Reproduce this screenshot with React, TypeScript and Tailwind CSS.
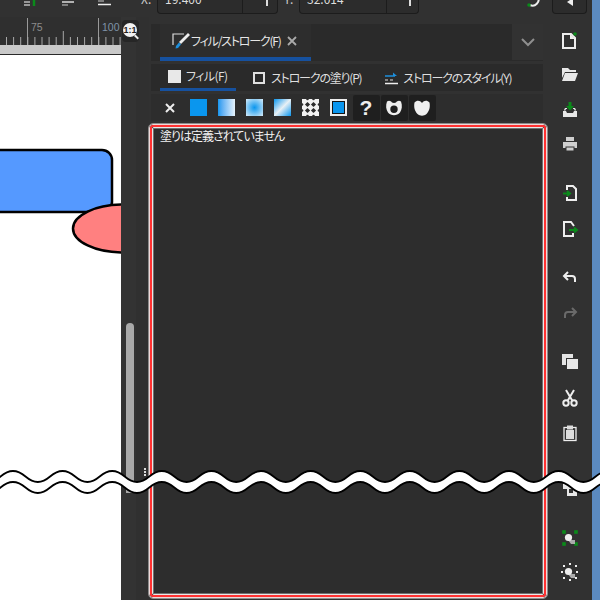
const JP = "font-['Noto_Sans_CJK_JP','Noto_Sans',sans-serif] [font-feature-settings:'palt']";

function Ruler() {
  const ticks = Array.from({ length: 18 }, (_, i) => i);
  return (
    <div className="h-[28px] bg-[#2f2f2f] relative">
      <svg width="121" height="28" className="block">
        <line x1="27.5" y1="1" x2="27.5" y2="28" stroke="#9a9a9a" />
        <line x1="98.5" y1="1" x2="98.5" y2="28" stroke="#9a9a9a" />
        {ticks.map((i) => (
          <line key={i} x1={6.5 + i * 7.1} y1={i === 8 ? 14 : 20} x2={6.5 + i * 7.1} y2="28" stroke="#a8a8a8" />
        ))}
        <text x="31" y="14" fontSize="10.5" fill="#8c8c8c" fontFamily="Liberation Sans">75</text>
        <text x="102" y="14" fontSize="10.5" fill="#7f93a8" fontFamily="Liberation Sans">100</text>
      </svg>
    </div>
  );
}

function DocNew() {
  return (
    <svg width="20" height="20" viewBox="0 0 20 20">
      <path d="M3 3h8l4 4v10H3z" fill="none" stroke="#eee" strokeWidth="2" />
      <path d="M10 3v5h5z" fill="#eee" />
      <circle cx="15" cy="3" r="1.8" fill="#0a8a1a" />
    </svg>
  );
}
function Open() {
  return (
    <svg width="20" height="20" viewBox="0 0 20 20">
      <path d="M2 3h6l2 2h6v2H5L2 13z" fill="#e8e8e8" />
      <path d="M5 8h13l-3 8H2z" fill="#e8e8e8" />
    </svg>
  );
}
function Save() {
  return (
    <svg width="20" height="20" viewBox="0 0 20 20">
      <path d="M3 11h3l1 2h6l1-2h3v6H3z" fill="#e8e8e8" />
      <path d="M4 10l1-2h2v1H6l-1 2zM16 10l-1-2h-2v1h1l1 2z" fill="#e8e8e8" />
      <path d="M8.5 2h3v4h2.5L10 10.500 6 6h2.500z" fill="#0a8a1a" />
    </svg>
  );
}
function Print() {
  return (
    <svg width="20" height="20" viewBox="0 0 20 20">
      <rect x="6" y="3" width="8" height="4" fill="#cfcfcf" />
      <rect x="3" y="8" width="14" height="6" fill="#cfcfcf" />
      <rect x="6" y="13" width="8" height="4" fill="#cfcfcf" stroke="#333" />
    </svg>
  );
}
function Import() {
  return (
    <svg width="20" height="20" viewBox="0 0 20 20">
      <path d="M7 7V3h6l3 3v11H7v-3" fill="none" stroke="#eee" strokeWidth="2" />
      <path d="M3 10.500h6M7 8l3 2.500L7 13" fill="none" stroke="#0a8a1a" strokeWidth="2" />
    </svg>
  );
}
function Export() {
  return (
    <svg width="20" height="20" viewBox="0 0 20 20">
      <path d="M14 7l-3-4H4v14h9v-3" fill="none" stroke="#eee" strokeWidth="2" />
      <path d="M9 11h7M14 8.500l3 2.500-3 2.500" fill="none" stroke="#0a8a1a" strokeWidth="2" />
    </svg>
  );
}
function Undo({ color = "#eee", flip = false }: { color?: string; flip?: boolean }) {
  return (
    <svg width="20" height="20" viewBox="0 0 20 20" style={flip ? { transform: "scaleX(-1)" } : undefined}>
      <path d="M4 8h8a3 3 0 0 1 3 3v3" fill="none" stroke={color} strokeWidth="2" />
      <path d="M8 4L4 8l4 4" fill="none" stroke={color} strokeWidth="2" />
    </svg>
  );
}
function Copy() {
  return (
    <svg width="20" height="20" viewBox="0 0 20 20">
      <rect x="2" y="2" width="11" height="11" fill="#e4e4e4" />
      <rect x="6.500" y="6.500" width="12" height="11" fill="#e8e8e8" stroke="#333" />
    </svg>
  );
}
function Cut() {
  return (
    <svg width="20" height="20" viewBox="0 0 20 20">
      <path d="M6 2l6.500 11M14 2L7.500 13" stroke="#eee" strokeWidth="2" fill="none" />
      <circle cx="6" cy="15" r="2.700" stroke="#eee" strokeWidth="2" fill="none" />
      <circle cx="14" cy="15" r="2.700" stroke="#eee" strokeWidth="2" fill="none" />
    </svg>
  );
}
function Paste() {
  return (
    <svg width="20" height="20" viewBox="0 0 20 20">
      <rect x="4" y="4.500" width="12" height="13" fill="none" stroke="#eee" strokeWidth="1.300" />
      <rect x="6" y="7" width="8" height="9" fill="#ddd" />
      <rect x="7" y="2.500" width="6" height="4" fill="#ddd" />
    </svg>
  );
}
function Dup() {
  return (
    <svg width="20" height="20" viewBox="0 0 20 20">
      <rect x="3" y="4" width="6" height="6" fill="#e8e8e8" />
      <rect x="7" y="8" width="10" height="9" fill="#e8e8e8" />
      <rect x="9" y="10" width="4" height="4" fill="#333" />
    </svg>
  );
}
function Group({ dots }: { dots: string }) {
  const r = dots === "#eee" ? 1 : 1.8;
  return (
    <svg width="20" height="20" viewBox="0 0 20 20">
      {[[4, 4], [16, 4], [4, 16], [16, 16]].map(([x, y]) => (
        <rect key={`${x}${y}`} x={x - r} y={y - r} width={r * 2} height={r * 2} fill={dots} />
      ))}
      {dots === "#eee" && [[10, 2], [2, 10], [17, 10], [10, 18]].map(([x, y]) => (
        <rect key={`${x}${y}`} x={x - 1} y={y - 1} width="2" height="2" fill="#eee" />
      ))}
      <path d="M8 12h7v4H11z" fill="#aaa" />
      <circle cx="8.500" cy="9.500" r="3.600" fill="#eee" />
    </svg>
  );
}

function Tool({ children, className = "" }: { children: React.ReactNode; className?: string }) {
  return <div className={`h-[34px] w-full flex items-center justify-center ${className}`}>{children}</div>;
}

function Swatch({ className, children }: { className?: string; children?: React.ReactNode }) {
  return <div className={`w-[17px] h-[17px] mx-[5.5px] shrink-0 ${className ?? ""}`}>{children}</div>;
}

function DarkBtn({ children }: { children: React.ReactNode }) {
  return <div className="w-[27px] h-[26px] mr-px bg-[#1f1f1f] rounded-[2px] flex items-center justify-center shrink-0">{children}</div>;
}

export default function App() {
  return (
    <div className={`w-[600px] h-[600px] relative overflow-hidden bg-[#313131] flex ${JP}`}>
      <div className="w-[547px] shrink-0 flex flex-col">
        {/* top toolbar */}
        <div className="h-[17px] flex items-start shrink-0 overflow-hidden">
          <svg width="130" height="17" className="shrink-0">
            <path d="M24 2h6M24 5h6" stroke="#bbb" strokeWidth="1.500" />
            <path d="M34 0v6" stroke="#0a8a1a" strokeWidth="2.500" />
            <path d="M62 2h12" stroke="#ddd" strokeWidth="1.500" />
            <path d="M62 5h6" stroke="#999" strokeWidth="1.500" />
            <path d="M98 1h6" stroke="#999" strokeWidth="1.500" />
            <path d="M98 4.500h13" stroke="#eee" strokeWidth="1.500" />
          </svg>
          <span className="w-[27px] text-[12px] leading-[8px] text-[#ccc] mt-[-5px] pl-[11px] shrink-0">X:</span>
          <div className="w-[121px] h-[14px] border border-t-0 border-[#1c1c1c] rounded-b-[4px] bg-[#2c2c2c] flex shrink-0 overflow-hidden">
            <span className="flex-1 pl-[7px] text-[12px] leading-[8px] text-[#ddd] mt-[-5px]">19.400</span>
            <span className="w-[35px] border-l border-[#1c1c1c] flex justify-center pl-[14px] shrink-0">
              <span className="w-[2px] h-[6px] bg-[#ddd]" />
            </span>
          </div>
          <span className="w-[21px] text-[12px] leading-[8px] text-[#ccc] mt-[-5px] pl-[6px] shrink-0">Y:</span>
          <div className="w-[120px] h-[14px] border border-t-0 border-[#1c1c1c] rounded-b-[4px] bg-[#2c2c2c] flex shrink-0 overflow-hidden">
            <span className="flex-1 pl-[7px] text-[12px] leading-[8px] text-[#ddd] mt-[-5px]">32.014</span>
            <span className="w-[32px] border-l border-[#1c1c1c] flex justify-center pl-[14px] shrink-0">
              <span className="w-[2px] h-[6px] bg-[#ddd]" />
            </span>
          </div>
          <div className="flex-1" />
          <svg width="20" height="10" viewBox="0 0 20 10" className="shrink-0 mr-[4px]">
            <path d="M15 -3a6 6 0 0 1-8 8" fill="none" stroke="#eee" strokeWidth="2" />
            <circle cx="6" cy="5" r="1.800" fill="#0a8a1a" />
          </svg>
        </div>

        <div className="flex-1 flex min-h-0">
          {/* canvas */}
          <div className="w-[121px] flex flex-col shrink-0">
            <Ruler />
            <div className="h-[10px] bg-[#c9c9c9] border-b border-[#2a2a2a]" />
            <div className="flex-1 bg-white overflow-hidden relative">
              <svg width="121" height="545" className="block">
                <rect x="-30" y="95" width="142" height="62" rx="10" fill="#5599ff" stroke="#000" strokeWidth="2.500" />
                <ellipse cx="123" cy="173.500" rx="50" ry="24" fill="#ff8080" stroke="#000" strokeWidth="2.500" />
              </svg>
            </div>
          </div>

          {/* scroll gutter */}
          <div className="w-[15px] shrink-0 pt-[306px] pl-[5px] bg-[#333333]">
            <div className="w-[8px] h-[170px] bg-[#a9a9a9] rounded-t-[4px]" />
          </div>
          <div className="w-[13px] shrink-0 bg-[#303030] pt-[451px] pl-[8px]">
            <div className="w-[2px] h-[2px] bg-[#ddd] mb-[1px]" />
            <div className="w-[2px] h-[2px] bg-[#ddd] mb-[1px]" />
            <div className="w-[2px] h-[2px] bg-[#ddd]" />
          </div>

          {/* dock */}
          <div className="w-[398px] shrink-0 flex flex-col">
            <div className="h-[7px] shrink-0" />
            {/* tab bar */}
            <div className="ml-[2px] mr-[4px] h-[37px] bg-[#2a2a2a] flex justify-between shrink-0">
              <div className="ml-[9px] w-[151px] h-[37px] border-b-[4px] border-[#16519f] bg-[#2d2d2d] flex items-center pl-[12px]">
                <svg width="18" height="18" viewBox="0 0 18 18" className="shrink-0">
                  <path d="M1 13V2h11" fill="none" stroke="#ddd" strokeWidth="1.200" />
                  <path d="M16 1l2 2-9 9-2-2z" fill="#eee" />
                  <path d="M7 10.500l2 2-3 3.500-2.500.5.500-2.500z" fill="#1d8fdc" />
                </svg>
                <span className="ml-px text-[12px] tracking-[-1.2px] text-[#e6e6e6] whitespace-nowrap">フィル/ストローク(F)</span>
                <svg width="10" height="10" viewBox="0 0 10 10" className="ml-[6px]">
                  <path d="M1 1l8 8M9 1l-8 8" stroke="#aaa" strokeWidth="1.800" />
                </svg>
              </div>
              <div className="w-[31px] h-[36px] bg-[#323232] flex items-center justify-center">
                <svg width="14" height="10" viewBox="0 0 14 10">
                  <path d="M1 2l6 6 6-6" fill="none" stroke="#8f8f8f" strokeWidth="2" />
                </svg>
              </div>
            </div>
            <div className="h-[3px] shrink-0" />
            {/* sub tabs */}
            <div className="ml-[2px] mr-[4px] h-[27px] bg-[#2a2a2a] flex items-center shrink-0 text-[12px] tracking-[-1.2px] text-[#dedede] whitespace-nowrap">
              <div className="ml-[9px] w-[76px] h-[27px] border-b-[3px] border-[#16519f] flex items-center pl-[8px] tracking-[-0.6px]">
                <div className="w-[13px] h-[13px] bg-[#e8e8e8]" />
                <span className="ml-[5px]">フィル(F)</span>
              </div>
              <div className="ml-[17px] w-[12px] h-[12px] border-2 border-[#e0e0e0]" />
              <span className="ml-[6px]">ストロークの塗り(P)</span>
              <svg width="14" height="14" viewBox="0 0 14 14" className="ml-[23px] shrink-0">
                <path d="M1 5h10" stroke="#1d8fdc" strokeWidth="1.500" />
                <path d="M9 1.500l4 3.500-4 0z" fill="#1d8fdc" />
                <path d="M1 9h3M6 9h3" stroke="#ddd" strokeWidth="1.200" />
                <path d="M1 12.500h13" stroke="#eee" strokeWidth="1.500" />
              </svg>
              <span className="ml-[5px]">ストロークのスタイル(Y)</span>
            </div>
            <div className="h-[3px] shrink-0" />
            {/* paint row */}
            <div className="ml-[2px] mr-[4px] h-[27px] bg-[#2d2d2d] flex items-center shrink-0">
              <svg width="10" height="10" viewBox="0 0 10 10" className="ml-[14px] mr-[9.500px] shrink-0">
                <path d="M1 1l8 8M9 1l-8 8" stroke="#eee" strokeWidth="2" />
              </svg>
              <Swatch className="bg-[#0a96ee]" />
              <Swatch className="bg-gradient-to-r from-[#0a96ee] to-[#e6f3fb]" />
              <Swatch className="bg-[radial-gradient(circle,#0a96ee,#d8ecf9)]" />
              <Swatch className="bg-[linear-gradient(135deg,#0a96ee_0%,#e8f0f5_50%,#0a96ee_100%)]" />
              <Swatch>
                <svg width="17" height="17" viewBox="0 0 17 17">
                  <rect width="17" height="17" fill="#f2f2f2" />
                  {[[5.5, 5.5], [11.5, 5.5], [5.5, 11.5], [11.5, 11.5]].map(([x, y]) => (
                    <path key={`${x}-${y}`} d={`M${x - 2.6} ${y}L${x} ${y - 2.6}L${x + 2.6} ${y}L${x} ${y + 2.6}Z`} fill="#2d2d2d" />
                  ))}
                  {[[5.5, 0], [11.5, 0], [0, 5.5], [0, 11.5], [17, 5.5], [17, 11.5], [5.5, 17], [11.5, 17]].map(([x, y]) => (
                    <circle key={`e${x}-${y}`} cx={x} cy={y} r="1.300" fill="#2d2d2d" />
                  ))}
                </svg>
              </Swatch>
              <Swatch className="border-2 border-[#eee] bg-[#141414] p-px">
                <div className="w-full h-full bg-[#0a96ee]" />
              </Swatch>
              <DarkBtn><span className="text-[21px] font-bold text-[#eee] font-['Liberation_Sans',sans-serif] leading-none">?</span></DarkBtn>
              <DarkBtn>
                <svg width="18" height="18" viewBox="0 0 18 18">
                  <path fillRule="evenodd" d="M2 2.500c2-1.500 4-.5 5 1 .7.500 3.300.5 4 0 1-1.500 3-2.500 5-1 1.500 4 1 8-1 11-3 3.500-9 3.500-12 0C1 10.500.5 6.500 2 2.500zM9 6.500a3.700 3.700 0 1 0 0 7.400 3.700 3.700 0 0 0 0-7.400z" fill="#eee" />
                </svg>
              </DarkBtn>
              <DarkBtn>
                <svg width="18" height="18" viewBox="0 0 18 18">
                  <path d="M1.500 3.500c2.500-2.500 5.500-2 7.500.5 2-2.500 5-3 7.500-.5 1 5-.5 9-3 11.500-2.500 2.300-6.500 2.300-9 0C2 12.500.500 8.500 1.500 3.500z" fill="#f0f0f0" />
                </svg>
              </DarkBtn>
            </div>
            <div className="h-[2px] shrink-0" />
            {/* fill body */}
            <div className="h-[476px] w-[400px] ml-[-1px] rounded-[5px] border border-[#8c8c8c] shrink-0">
              <div className="h-full rounded-[4px] border border-[#f0d8d8]">
                <div className="h-full rounded-[3px] border-2 border-[#ff3232]">
                  <div className="h-full rounded-[2px] border border-[#e8e8e8]">
                    <div className="h-full border border-[#6f6f6f] bg-[#2d2d2d] pl-[6px]">
                      <p className="text-[12px] tracking-[-1px] leading-[14px] text-[#f2f2f2] whitespace-nowrap">塗りは定義されていません</p>
                    </div>
                  </div>
                </div>
              </div>
            </div>
          </div>
        </div>
      </div>

      {/* right toolbar */}
      <div className="w-[45px] shrink-0 flex flex-col items-center relative">
        <div className="w-[35px] h-[14px] border border-t-0 border-[#1c1c1c] rounded-b-[4px] bg-[#2c2c2c] shrink-0 flex items-start justify-center">
          <span className="w-0 h-0 border-y-[4px] border-y-transparent border-r-[6px] border-r-[#eee] mt-[-2px]" />
        </div>
        <div className="h-[10px] shrink-0" />
        <Tool><DocNew /></Tool>
        <Tool><Open /></Tool>
        <Tool className="mt-[1px]"><Save /></Tool>
        <Tool><Print /></Tool>
        <Tool className="mt-[15px]"><Import /></Tool>
        <Tool className="mt-[2px]"><Export /></Tool>
        <Tool className="mt-[15px]"><Undo /></Tool>
        <Tool className="mt-[2px]"><Undo color="#6a6a6a" flip /></Tool>
        <Tool className="mt-[14px]"><Copy /></Tool>
        <Tool className="mt-[2px]"><Cut /></Tool>
        <Tool className="mt-[1px]"><Paste /></Tool>
        <Tool className="mt-[22px]"><Dup /></Tool>
        <Tool className="mt-[15px]"><Group dots="#0a8a1a" /></Tool>
        <Tool><Group dots="#eee" /></Tool>
      </div>
      <div className="w-[8px] shrink-0 bg-[#5b8ac0]" />

      {/* 1:1 zoom badge */}
      <div className="absolute left-[122px] top-[20px] w-[17px] h-[22px] bg-[#262626] rounded-[4px]">
        <div className="absolute left-[1px] top-[3px] w-[14px] h-[14px] rounded-full bg-[#f2f2f2] flex items-center justify-center text-[9px] font-bold text-[#222] font-['Liberation_Sans',sans-serif] leading-none">1:1</div>
        <div className="absolute left-[12px] top-[16px] w-[5px] h-[2px] bg-[#eee] rotate-45" />
      </div>

      {/* torn-page wave */}
      <svg width="600" height="40" viewBox="0 0 600 40" className="absolute left-0 top-[465px]">
        <path d={wave(6) + " " + waveBack(17)} fill="#fff" />
        <path d={wave(6)} fill="none" stroke="#000" strokeWidth="1.800" />
        <path d={wave(17)} fill="none" stroke="#000" strokeWidth="1.800" />
      </svg>
    </div>
  );
}

function wave(y: number) {
  let d = `M-37 ${y}`;
  for (let k = -1; k < 13; k++) {
    const x0 = 13 + 49.6 * k;
    d += ` C${x0 + 12} ${y} ${x0 + 13} ${y + 11} ${x0 + 24.8} ${y + 11}`;
    d += ` C${x0 + 36.6} ${y + 11} ${x0 + 37.6} ${y} ${x0 + 49.6} ${y}`;
  }
  return d;
}
function waveBack(y: number) {
  const last = 13 + 49.6 * 13;
  let d = `L${last} ${y}`;
  for (let k = 12; k >= -1; k--) {
    const x0 = 13 + 49.6 * k;
    d += ` C${x0 + 37.6} ${y} ${x0 + 36.6} ${y + 11} ${x0 + 24.8} ${y + 11}`;
    d += ` C${x0 + 13} ${y + 11} ${x0 + 12} ${y} ${x0} ${y}`;
  }
  return d + " Z";
}
